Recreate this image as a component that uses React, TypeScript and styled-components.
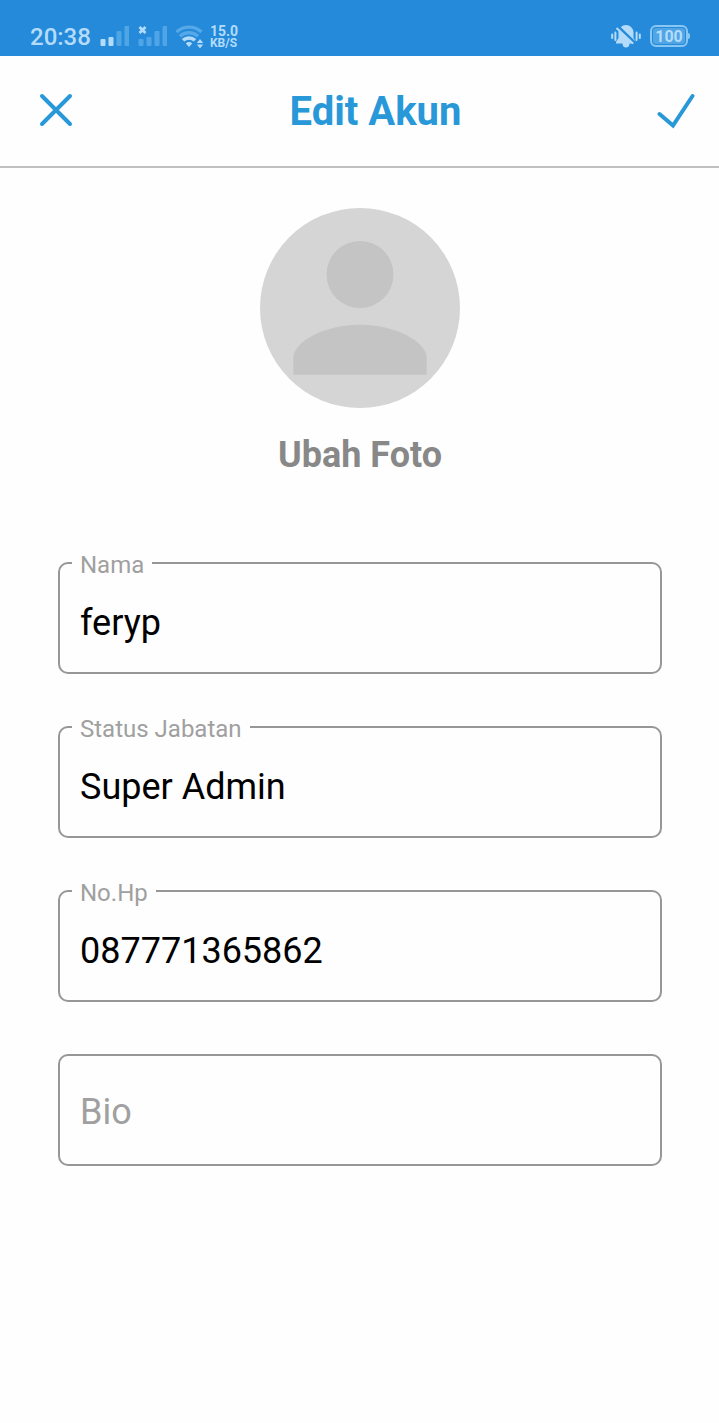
import React, { useId, useState } from "react";
import styled, { createGlobalStyle } from "styled-components";

const color = {
  bar: "#248ad9",
  barInk: "#b4dcfa",
  accent: "#2998d8",
  page: "#fefefe",
  rule: "#c0c0c0",
  outline: "#979797",
  hint: "#a0a0a0",
  muted: "#888888",
};

const GlobalStyle = createGlobalStyle`
  *, *::before, *::after { box-sizing: border-box; }
  body {
    margin: 0;
    background: ${color.page};
    font-family: Roboto, "Liberation Sans", sans-serif;
  }
`;

const Screen = styled.div`
  min-height: 100vh;
  background: ${color.page};
`;

const StatusBar = styled.div`
  display: flex;
  align-items: flex-end;
  justify-content: space-between;
  height: 56px;
  padding: 0 28px 8px 30px;
  background: ${color.bar};
  color: ${color.barInk};
`;

const StatusGroup = styled.div`
  display: flex;
  align-items: center;
  gap: 9px;
  height: 24px;
`;

const Network = styled.div`
  display: flex;
  align-items: center;
  gap: 5px;
`;

const Clock = styled.time`
  padding-top: 2px;
  font-size: 24px;
  line-height: 24px;
  font-weight: 500;
`;

const Speed = styled.div`
  display: flex;
  flex-direction: column;
  font-weight: 700;
  font-size: 14px;
  line-height: 14px;
`;

const SpeedUnit = styled.span`
  font-size: 12px;
  line-height: 10px;
`;

const Battery = styled.div`
  display: flex;
  align-items: center;
  width: 41px;
`;

const BatteryBody = styled.div`
  padding: 1px;
  width: 38px;
  height: 22px;
  border: 2px solid #8ac6f2;
  border-radius: 6px;
`;

const BatteryLevel = styled.div`
  height: 16px;
  border-radius: 3px;
  background: #4fa5e6;
  font-size: 16px;
  line-height: 17px;
  font-weight: 700;
  text-align: center;
`;

const BatteryTip = styled.span`
  width: 2px;
  height: 6px;
  border-radius: 0 2px 2px 0;
  background: #8ac6f2;
`;

const Header = styled.header`
  display: grid;
  grid-template-columns: 128px 1fr 96px;
  align-items: center;
  height: 112px;
  border-bottom: 2px solid ${color.rule};
`;

const Title = styled.h1`
  margin: 0;
  padding-top: 2px;
  font-size: 40px;
  line-height: 48px;
  font-weight: 700;
  text-align: center;
  color: ${color.accent};
`;

const IconButton = styled.button<{ $end?: boolean }>`
  display: flex;
  align-items: center;
  justify-content: ${(p) => (p.$end ? "flex-end" : "flex-start")};
  height: 100%;
  padding: 0 ${(p) => (p.$end ? 24 : 38)}px;
  border: 0;
  background: none;
  color: ${color.accent};
  cursor: pointer;
`;

const Content = styled.form`
  display: flex;
  flex-direction: column;
  padding: 40px 57px 40px 58px;
`;

const PhotoButton = styled.button`
  display: flex;
  flex-direction: column;
  align-items: center;
  align-self: center;
  gap: 24px;
  padding: 0;
  border: 0;
  background: none;
  color: ${color.muted};
  font-family: inherit;
  font-size: 36px;
  line-height: 46px;
  font-weight: 700;
  cursor: pointer;
`;

const Fields = styled.div`
  display: flex;
  flex-direction: column;
  gap: 52px;
  margin-top: 84px;
`;

const Field = styled.div`
  position: relative;
  height: 112px;
`;

const FloatingLabel = styled.label`
  position: absolute;
  top: -11px;
  left: 14px;
  padding: 0 8px;
  background: ${color.page};
  color: ${color.hint};
  font-size: 24px;
  line-height: 28px;
`;

const TextInput = styled.input`
  width: 100%;
  height: 100%;
  padding: 10px 20px 0;
  border: 2px solid ${color.outline};
  border-radius: 10px;
  outline: none;
  background: transparent;
  color: #000;
  font-family: inherit;
  font-size: 36px;

  &::placeholder {
    color: ${color.hint};
    opacity: 1;
  }
  &:placeholder-shown {
    padding-top: 4px;
  }
`;

function Signal({ active, off }: { active: number; off?: boolean }) {
  const tops = [14, 12, 6, 1];
  return (
    <svg width="29" height="22" viewBox="0 0 29 22" aria-hidden="true">
      {tops.map((top, i) => (
        <rect
          key={top}
          x={i * 8 + 0.5}
          y={top}
          width="5"
          height={21 - top}
          rx="1"
          fill={i < active ? "#b4dcfa" : "#4fa5e6"}
        />
      ))}
      {off && <path d="M1.5 2l6 6M7.5 2l-6 6" stroke="#b4dcfa" strokeWidth="2.8" />}
    </svg>
  );
}

function Wifi() {
  return (
    <svg width="29" height="24" viewBox="0 0 29 24" fill="none" aria-hidden="true">
      <path d="M0.5 8a18.5 18.5 0 0 1 25 0" stroke="#55a9e8" strokeWidth="3.4" />
      <path d="M4 12.3a13 13 0 0 1 18 0" stroke="#55a9e8" strokeWidth="3.4" />
      <path d="M7 16.3a8.8 8.8 0 0 1 12 0" stroke="#b4dcfa" strokeWidth="3.6" />
      <path d="M9.8 19.4a4.6 4.6 0 0 1 6.4 0L13 23z" fill="#b4dcfa" />
      <path d="M24 15l3.2 4h-6.400zM24 24.400l3.200-4h-6.400z" fill="#b4dcfa" />
    </svg>
  );
}

function MutedBell() {
  return (
    <svg width="30" height="24" viewBox="0 0 30 24" fill="none" aria-hidden="true">
      <path
        d="M15 1a7.5 7.5 0 0 1 7.5 7.5V14l2.5 4v1.5H5V18L7.5 14V8.5A7.5 7.5 0 0 1 15 1zM11.5 19.500h7a3.5 4 0 0 1-7 0z"
        fill="#b4dcfa"
      />
      <path d="M7 2.600L26 20.800" stroke={color.bar} strokeWidth="2.8" />
      <path d="M5.500 4L22 19.500" stroke="#b4dcfa" strokeWidth="2" />
      <path
        d="M1.2 10.5v3.5M4.4 8.5v7.500M25.600 8.500v7.500M28.800 10.500v3.500"
        stroke="#b4dcfa"
        strokeWidth="2"
        strokeLinecap="round"
      />
    </svg>
  );
}

function CloseIcon() {
  return (
    <svg width="36" height="36" viewBox="0 0 36 36" aria-hidden="true">
      <path
        d="M4 3l28 28M32 3L4 31"
        fill="none"
        stroke="currentColor"
        strokeWidth="4"
        strokeLinecap="round"
      />
    </svg>
  );
}

function CheckIcon() {
  return (
    <svg width="38" height="36" viewBox="0 0 38 36" aria-hidden="true">
      <path
        d="M2.5 21L16 32.5L35.5 3"
        fill="none"
        stroke="currentColor"
        strokeWidth="4"
        strokeLinecap="round"
      />
    </svg>
  );
}

function Avatar() {
  return (
    <svg width="200" height="200" viewBox="0 0 200 200" aria-hidden="true">
      <circle cx="100" cy="100" r="100" fill="#d5d5d5" />
      <circle cx="100" cy="66.5" r="33.5" fill="#c4c4c4" />
      <path
        d="M33.3 166.7V150C33.3 133 66 116.7 100 116.7S166.7 133 166.7 150V166.7z"
        fill="#c4c4c4"
      />
    </svg>
  );
}

interface OutlinedFieldProps {
  label: string;
  initial?: string;
  type?: string;
}

function OutlinedField({ label, initial = "", type = "text" }: OutlinedFieldProps) {
  const id = useId();
  const [value, setValue] = useState(initial);
  return (
    <Field>
      <TextInput
        id={id}
        type={type}
        value={value}
        placeholder={label}
        aria-label={label}
        onChange={(e) => setValue(e.target.value)}
      />
      {value !== "" && <FloatingLabel htmlFor={id}>{label}</FloatingLabel>}
    </Field>
  );
}

export default function App() {
  return (
    <Screen>
      <GlobalStyle />
      <StatusBar>
        <StatusGroup>
          <Clock>20:38</Clock>
          <Signal active={2} />
          <Signal active={0} off />
          <Network>
            <Wifi />
            <Speed>
              <span>15.0</span>
              <SpeedUnit>KB/S</SpeedUnit>
            </Speed>
          </Network>
        </StatusGroup>
        <StatusGroup>
          <MutedBell />
          <Battery>
            <BatteryBody>
              <BatteryLevel>100</BatteryLevel>
            </BatteryBody>
            <BatteryTip />
          </Battery>
        </StatusGroup>
      </StatusBar>
      <Header>
        <IconButton type="button" aria-label="Tutup">
          <CloseIcon />
        </IconButton>
        <Title>Edit Akun</Title>
        <IconButton $end type="submit" form="akun" aria-label="Simpan">
          <CheckIcon />
        </IconButton>
      </Header>
      <Content id="akun" onSubmit={(e) => e.preventDefault()}>
        <PhotoButton type="button">
          <Avatar />
          Ubah Foto
        </PhotoButton>
        <Fields>
          <OutlinedField label="Nama" initial="feryp" />
          <OutlinedField label="Status Jabatan" initial="Super Admin" />
          <OutlinedField label="No.Hp" initial="087771365862" type="tel" />
          <OutlinedField label="Bio" />
        </Fields>
      </Content>
    </Screen>
  );
}
